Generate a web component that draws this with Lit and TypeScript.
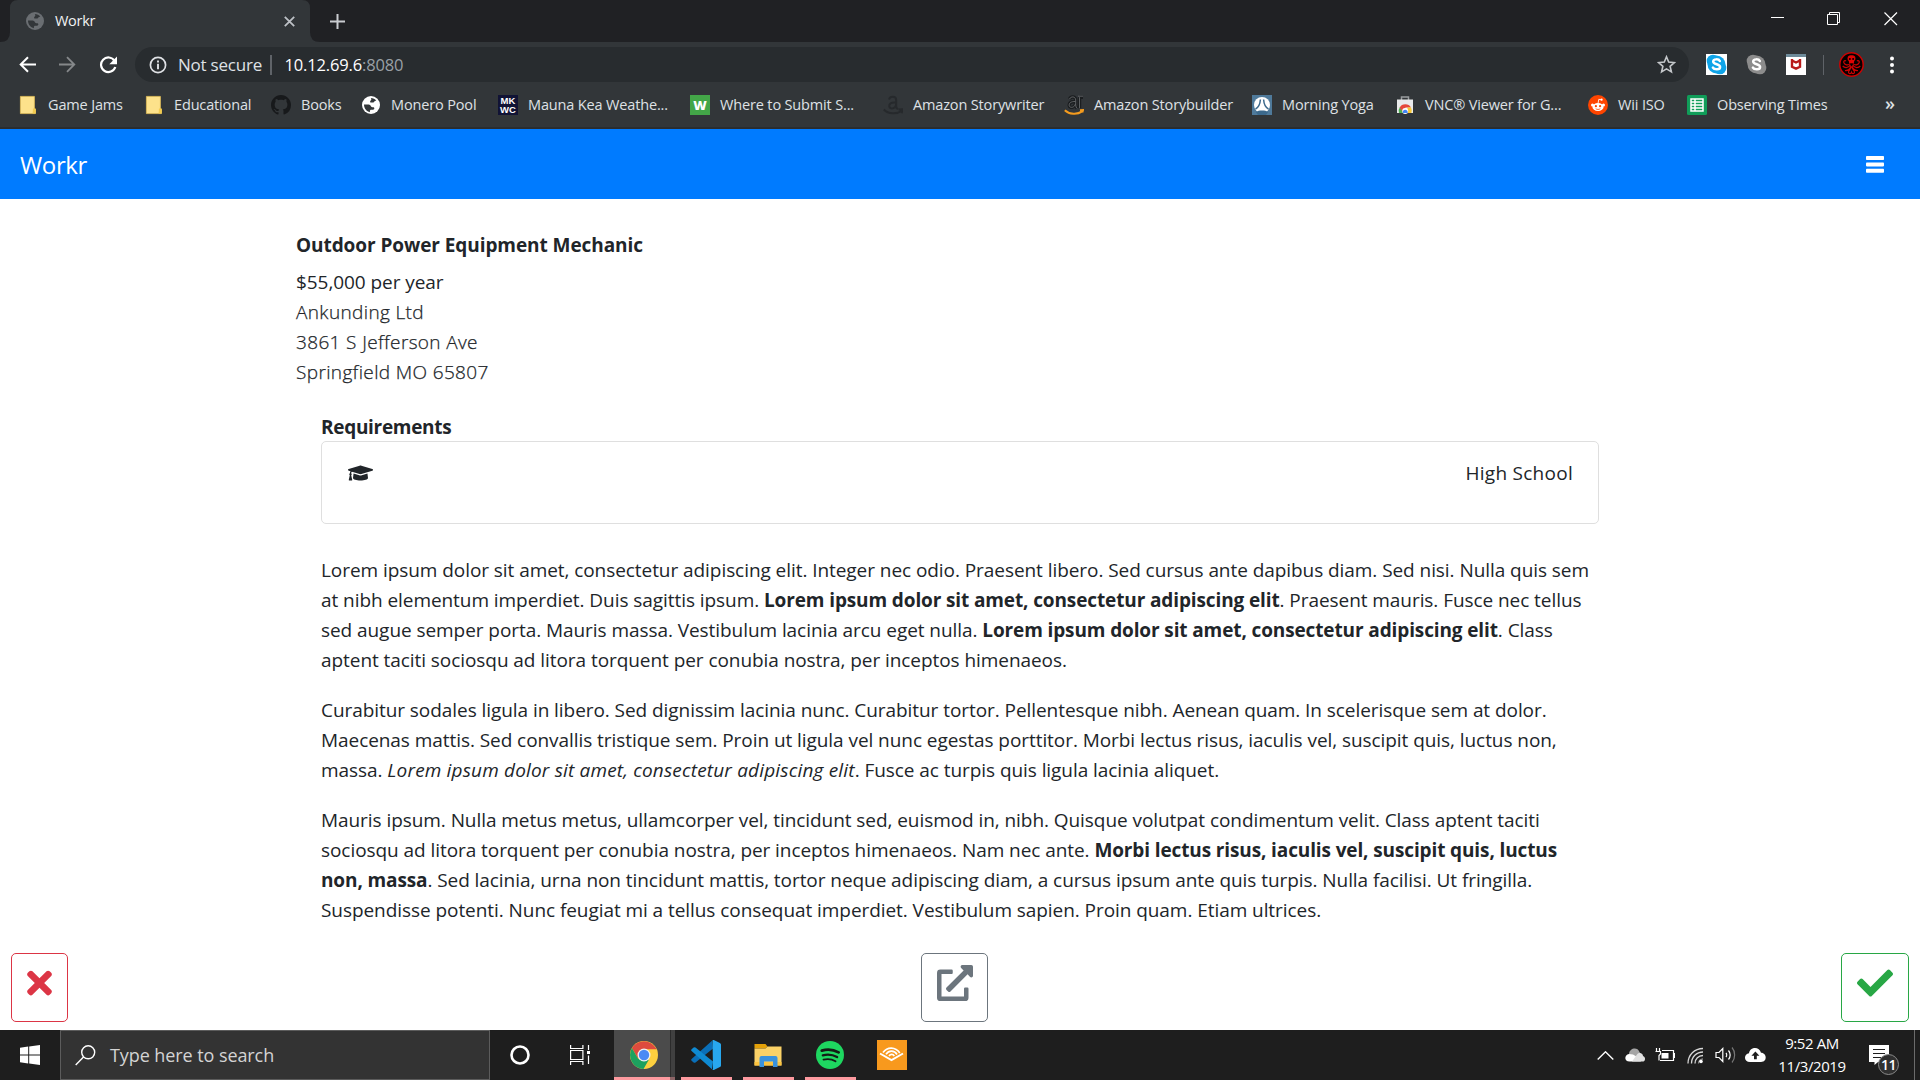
import { LitElement, html, css, svg, nothing } from "lit";
import { customElement } from "lit/decorators.js";

const globe = (color: string, hole: string, size: number) => html`
  <svg width=${size} height=${size} viewBox="0 0 18 18">
    <circle cx="9" cy="9" r="9" fill=${color} />
    <path fill=${hole} d="M2 8.600h4.600c1.300 0 1.800.8 2.300 1.700.4.800 1.200 1 2.100 1 1 0 1.300.5 1.300 1.200 0 .8-.6 1.200-1.500 1.200H9.300c-.9 0-1.400.6-1.400 1.300v1.300C4.500 15.500 2 12.500 2 8.600z" />
    <path fill=${hole} d="M8.800 2c2.300 0 4.300 1 5.500 2.700-.9 0-1.700.3-2.100 1-.4.6-1 .9-1.700.9H9.300c-.8 0-1.200-.4-1.200-.9 0-.7.5-1 .9-1.400.5-.5.3-1.500-.2-2.300z" />
  </svg>
`;

const folder = html`
  <svg width="20" height="20" viewBox="0 0 20 20">
    <path fill="#fde28b" stroke="#e3c059" stroke-width=".8" d="M2.400 1.400h14v12.200l1 .8v4.200h-15z" />
    <path fill="#f2cb4f" d="M15 13.400h2.800v5.200H14.600z" />
  </svg>
`;

const github = html`
  <svg width="20" height="20" viewBox="0 0 16 16">
    <path
      fill="#17191b"
      d="M8 0C3.580 0 0 3.580 0 8c0 3.540 2.290 6.530 5.470 7.590.4.070.55-.17.55-.38 0-.19-.01-.82-.01-1.490-2.010.37-2.530-.49-2.690-.94-.09-.23-.48-.94-.82-1.130-.28-.15-.68-.52-.01-.53.63-.01 1.080.58 1.230.82.72 1.210 1.870.87 2.330.66.070-.52.28-.87.51-1.070-1.780-.2-3.640-.89-3.640-3.950 0-.87.31-1.590.82-2.150-.08-.2-.36-1.020.08-2.120 0 0 .67-.21 2.200.82.64-.18 1.320-.27 2-.27s1.360.09 2 .27c1.530-1.040 2.200-.82 2.200-.82.44 1.100.16 1.920.08 2.120.51.56.82 1.270.82 2.150 0 3.070-1.870 3.750-3.650 3.950.29.25.54.73.54 1.480 0 1.070-.01 1.930-.01 2.200 0 .21.15.46.55.38A8.010 8.010 0 0 0 16 8c0-4.420-3.580-8-8-8z"
    />
  </svg>
`;

const mkwc = html`<span class="mkwc"><span>MK</span><span>WC</span></span>`;
const wTile = html`<span class="wtile">W</span>`;

const storywriter = html`
  <svg width="20" height="20" viewBox="0 0 20 20" fill="none">
    <path stroke="#26292c" stroke-width="2" d="M6 4.500C7 1 13 .8 13.200 5v6.500c0 1.500.8 2.200 1.800 2.600M13 7.500C8 7 5.800 9 6.300 11.500c.7 3.300 6 2.200 6.800-1.500" />
    <path stroke="#26292c" stroke-width="2" d="M.8 14.500c4.500 4.700 13 5 18 1.200M15.500 14.500l4-.3-.8 4" />
  </svg>
`;
const storybuilder = html`
  <svg width="20" height="20" viewBox="0 0 20 20" fill="none">
    <path stroke="#1b1e20" stroke-width="3.400" d="M5.500 4C7 1 11.500 1.200 11.700 5v5c0 1.500.6 2.600 1.300 3.400M11.500 6.500C7 6.300 5 8 5.200 10.500c.5 3 5.400 2.300 6.200-1.500M15.500 2.200v11M15.500 2.200h3.500" />
    <path stroke="#66696b" stroke-width=".9" d="M5.500 4C7 1 11.500 1.200 11.700 5v5c0 1.500.6 2.600 1.300 3.400M11.500 6.500C7 6.300 5 8 5.200 10.500c.5 3 5.400 2.300 6.200-1.500M15.500 2.200v11M14 1.200h5" />
    <path stroke="#f49b1e" stroke-width="2" d="M.8 15.200c4.500 4.300 12.500 4.600 17.400 1.200M16 15.300l3-.3-.7 2.600" />
  </svg>
`;
const yoga = html`
  <svg width="20" height="20" viewBox="0 0 20 20">
    <path fill="#4f7a9b" d="M0 0h20v20H0z" />
    <circle cx="10" cy="10" r="8" fill="#fff" />
    <path stroke="#3c698c" stroke-width="1.500" fill="none" d="M8.400 4.500C8 10 6.500 12.500 3.500 14M11.600 4.500c.4 5.500 1.900 8 4.900 9.500" />
    <path fill="#3c698c" d="M4 17.200c1.300-1.500 3.500-1.800 6-1.800s4.700.3 6 1.800L14 20H6z" />
  </svg>
`;
const webstore = html`
  <svg width="20" height="20" viewBox="0 0 20 20">
    <path fill="none" stroke="#9a9da0" stroke-width="1.500" d="M6.500 5V2h7v3" />
    <path fill="#e9eaeb" d="M2 4.500h16v13.500H2z" />
    <path fill="#4caf50" d="M4 18a6.500 6.500 0 0 1 1-6l4 6z" />
    <path fill="#e5483b" d="M4.600 12.600A6.500 6.500 0 0 1 16 12.500h-5.500L8.500 18 5 13z" />
    <path fill="#f8c733" d="M12.500 12.500H16a7 7 0 0 1 .4 5.500h-4.500z" />
    <circle cx="10.200" cy="16" r="3" fill="#fff" />
    <path fill="#4285f4" d="M7.800 18a2.500 2.500 0 1 1 4.800 0z" />
  </svg>
`;
const reddit = html`
  <svg width="20" height="20" viewBox="0 0 20 20">
    <circle cx="10" cy="10" r="10" fill="#ff4500" />
    <ellipse cx="10" cy="12" rx="5.600" ry="4" fill="#fff" />
    <circle cx="4.500" cy="10" r="1.500" fill="#fff" /><circle cx="15.500" cy="10" r="1.500" fill="#fff" />
    <circle cx="13.600" cy="4.700" r="1.100" fill="#fff" />
    <path stroke="#fff" stroke-width=".9" fill="none" d="M10 8.500l.8-4.200 2.600.5" />
    <circle cx="7.900" cy="11.200" r="1.100" fill="#ff4500" /><circle cx="12.100" cy="11.200" r="1.100" fill="#ff4500" />
    <path stroke="#ff4500" stroke-width=".8" fill="none" d="M7.700 13.700c1.300 1 3.300 1 4.600 0" />
  </svg>
`;
const sheets = html`
  <svg width="20" height="20" viewBox="0 0 20 20">
    <rect width="20" height="20" rx="1.500" fill="#109d59" />
    <path fill="none" stroke="#fff" stroke-width="1.500" d="M4 4h12v12H4zM4 7h12M4 10h12M4 13h12M8 4v12" />
  </svg>
`;

/** Bookmark bar entries: icon, label and the width each one takes up. */
const BOOKMARKS = [
  { icon: folder, label: "Game Jams", width: 126 },
  { icon: folder, label: "Educational", width: 127 },
  { icon: github, label: "Books", width: 90 },
  { icon: globe("#ffffff", "#323639", 18), label: "Monero Pool", width: 137 },
  { icon: mkwc, label: "Mauna Kea Weathe...", width: 192 },
  { icon: wTile, label: "Where to Submit S...", width: 193 },
  { icon: storywriter, label: "Amazon Storywriter", width: 181 },
  { icon: storybuilder, label: "Amazon Storybuilder", width: 188 },
  { icon: yoga, label: "Morning Yoga", width: 143 },
  { icon: webstore, label: "VNC® Viewer for G...", width: 193 },
  { icon: reddit, label: "Wii ISO", width: 99 },
  { icon: sheets, label: "Observing Times", width: 150 },
];

const skype = (body: string, tile: string | null) => html`
  <svg width="21" height="21" viewBox="0 0 21 21">
    ${tile ? svg`<path fill=${tile} d="M0 0h21v21H0z" />` : nothing}
    <circle cx="7" cy="7" r="6.300" fill=${body} /><circle cx="14" cy="14" r="6.300" fill=${body} />
    <circle cx="10.500" cy="10.500" r="9" fill=${body} />
    <path fill="none" stroke="#fff" stroke-width="2.500" stroke-linecap="round" d="M13.800 7C12.800 4.800 7.200 4.700 7.200 7.500c0 3.400 6.900 2.200 6.900 5.500 0 3.200-6 2.900-7.200.6" />
  </svg>
`;

@customElement("browser-chrome")
class BrowserChrome extends LitElement {
  static styles = css`
    :host { display: flex; flex-direction: column; height: 129px; background: #323639; color: #dfe1e5; font: 14.5px "Open Sans", "Noto Sans", sans-serif; box-sizing: border-box; box-shadow: inset 0 -2px #2a2d30; }
    svg { display: block; flex: none; }
    .strip { display: flex; height: 42px; background: #202124; }
    .tab { display: flex; align-items: center; box-sizing: border-box; width: 320px; height: 42px; padding: 0 25px 0 26px; clip-path: path("M0 42Q10 42 10 32V8Q10 0 18 0H302Q310 0 310 8V32Q310 42 320 42Z"); background: #323639; }
    .title { margin: -1px 0 0 11px; flex: 1; color: #f1f3f4; letter-spacing: -0.3px; line-height: 22px; }
    .plus { margin: 14px 0 0 10px; }
    .window { display: flex; margin-left: auto; padding: 12px 22px 0 0; gap: 43px; }
    .toolbar { display: flex; align-items: center; height: 45px; padding-left: 19px; }
    .nav { display: flex; gap: 23px; width: 116px; align-items: center; }
    .omnibox { display: flex; align-items: center; box-sizing: border-box; width: 1554px; height: 35px; padding: 0 13px 0 14px; border-radius: 18px; background: #282c2f; font-size: 17px; }
    .secure { margin-left: 11px; width: 92px; letter-spacing: -0.22px; white-space: nowrap; }
    .rule { width: 1.5px; height: 20px; background: #5f6368; }
    .url { margin-left: 13px; flex: 1; color: #fff; font-size: 16.5px; letter-spacing: -0.15px; }
    .port { color: #9aa0a6; }
    .ext { display: flex; align-items: center; padding-left: 17px; }
    .ext .rule { margin: 0 15px 0 17px; width: 1px; }
    .bookmarks { display: flex; align-items: center; height: 36px; padding-left: 18px; }
    .bookmark { display: flex; align-items: center; gap: 10px; white-space: nowrap; letter-spacing: -0.15px; }
    .label { margin-top: -1px; }
    .icon { display: flex; justify-content: center; width: 20px; }
    .more { margin-left: 48px; font-size: 18px; font-weight: 600; line-height: 20px; padding-bottom: 4px; }
    .mkwc { display: flex; flex-direction: column; align-items: center; justify-content: center; width: 20px; height: 20px; background: #111335; color: #fff; font: bold 9.5px/9px "Liberation Sans", Arial, sans-serif; letter-spacing: 0; }
    .wtile { display: flex; align-items: center; justify-content: center; width: 20px; height: 20px; background: #43a648; color: #fff; font-weight: 800; font-size: 13px; line-height: 20px; }
  `;

  render() {
    return html`
      <div class="strip">
        <div class="tab">
          ${globe("#6a6e72", "#323639", 18)}
          <span class="title">Workr</span>
          <svg width="11" height="11" viewBox="0 0 11 11"><path stroke="#bdc1c6" stroke-width="1.800" d="M.8.8l9.400 9.400M10.200.8L.8 10.200" /></svg>
        </div>
        <svg class="plus" width="15" height="15" viewBox="0 0 15 15"><path stroke="#c9ccd0" stroke-width="2" d="M7.500 0v15M0 7.500h15" /></svg>
        <div class="window">
          <svg width="13" height="13" viewBox="0 0 13 13"><path stroke="#fff" d="M0 5.500h13" /></svg>
          <svg width="14" height="14" viewBox="0 0 14 14" fill="none"><path stroke="#fff" d="M.5 2.500h10v10h-10zM2.500 2.500v-2h10v10h-2" /></svg>
          <svg width="14" height="14" viewBox="0 0 14 14"><path stroke="#fff" stroke-width="1.200" d="M.5.5l12.500 12.500M13 .5L.5 13" /></svg>
        </div>
      </div>
      <div class="toolbar">
        <div class="nav">
          <svg width="17" height="17" viewBox="0 0 17 17" fill="none"><path stroke="#fff" stroke-width="2" d="M17 8.500H2M9 1.200L1.700 8.500 9 15.800" /></svg>
          <svg width="17" height="17" viewBox="0 0 17 17" fill="none"><path stroke="#85888a" stroke-width="1.800" d="M0 8.500h15M8 1.200l7.300 7.300L8 15.800" /></svg>
          <svg width="19" height="18" viewBox="0 0 19 18" fill="none"><path stroke="#fff" stroke-width="2.200" d="M15.500 4.800A7.300 7.300 0 1 0 16.300 11" /><path fill="#fff" d="M18 .5v7.700h-7.700z" /></svg>
        </div>
        <div class="omnibox">
          <svg width="18" height="18" viewBox="0 0 18 18" fill="none"><circle cx="9" cy="9" r="7.600" stroke="#dfe1e5" stroke-width="1.700" /><path stroke="#dfe1e5" stroke-width="1.900" d="M9 4.500v2M9 7.800v5.500" /></svg>
          <span class="secure">Not secure</span>
          <span class="rule"></span>
          <span class="url">10.12.69.6<span class="port">:8080</span></span>
          <svg width="19" height="19" viewBox="0 0 19 19"><path fill="none" stroke="#c4c7ca" stroke-width="1.600" d="M9.500 1.800l2.200 5.300 5.700.5-4.300 3.700 1.300 5.600-4.900-3-4.900 3 1.300-5.600L1.600 7.600l5.700-.5z" /></svg>
        </div>
        <div class="ext">
          ${skype("#0fa4e8", "#ffffff")}
          <svg width="19" height="1"></svg>
          ${skype("#8c8c8c", null)}
          <svg width="19" height="1"></svg>
          <svg width="20" height="21" viewBox="0 0 20 21">
            <path fill="#fff" d="M0 0h20v21H0z" /><path fill="#6d8a99" d="M0 0h20v3H0z" />
            <path fill="none" stroke="#b81a1a" stroke-width="2.400" d="M6 5v7.800l4 1.900 4-1.900V5M5.500 6.200L10 8.500l4.500-2.300" />
          </svg>
          <span class="rule"></span>
          <svg width="25" height="25" viewBox="0 0 25 25" fill="none">
            <circle cx="12.500" cy="12.500" r="11.700" fill="#080000" stroke="#cc0303" stroke-width="1.500" />
            <path fill="#e00404" d="M9 4.500C10 2.700 15 2.700 16 4.500c1 2 .4 3.600-.8 4.500l-.4 2.300h-4.600L9.800 9C8.600 8 8 6.500 9 4.500z" />
            <circle cx="10.900" cy="7" r="1" fill="#080000" /><circle cx="14.100" cy="7" r="1" fill="#080000" />
            <path stroke="#cc0303" stroke-width="1.200" d="M11 11.500C9 14 5.500 12.800 4.800 10.500 4.400 9 6 8 7 9M14 11.500c2 2.500 5.500 1.300 6.200-1 .4-1.500-1.200-2.500-2.200-1.500M11.500 12.800C9 16.500 5.500 16 3.700 14M13.500 12.800c2.500 3.700 6 3.200 7.800 1.200M12 14c-1 3.500-3 4.800-6 4.500M13 14c1 3.500 3 4.800 6 4.500M12 15c0 2-2.300 3-2.500 5 0 2 2.500 2 3 .3.5 1.700 3 1.700 3-.3-.2-2-2.500-3-2.500-5" />
          </svg>
          <svg width="26" height="1"></svg>
          <svg width="4" height="18" viewBox="0 0 4 18" fill="#fff"><circle cx="2" cy="2.500" r="2" /><circle cx="2" cy="9" r="2" /><circle cx="2" cy="15.500" r="2" /></svg>
        </div>
      </div>
      <div class="bookmarks">
        ${BOOKMARKS.map(
          (b) => html`<div class="bookmark" style="width:${b.width}px"><span class="icon">${b.icon}</span><span class="label">${b.label}</span></div>`,
        )}
        <span class="more">»</span>
      </div>
    `;
  }
}

@customElement("job-page")
class JobPage extends LitElement {
  static styles = css`
    :host { display: flex; flex-direction: column; flex: 1; background: #fff; color: #212529; font: 19px/30px "Open Sans", "Noto Sans", sans-serif; letter-spacing: -0.062px; }
    svg { display: block; }
    p, h1, h2 { margin: 0; font-size: inherit; white-space: nowrap; }
    b, h1, h2 { font-weight: 700; letter-spacing: -0.12px; }
    h1 { letter-spacing: -0.07px; }
    em { letter-spacing: 0.17px; }
    .navbar { display: flex; align-items: center; justify-content: space-between; height: 70px; padding: 0 36px 0 20px; background: #007bff; color: #fff; }
    .brand { padding-top: 1px; font-size: 24px; letter-spacing: -0.35px; }
    .job { padding: 31px 297px 0 296px; }
    .summary { padding-top: 7px; }
    .light { font-weight: 300; letter-spacing: 0.36px; -webkit-text-stroke: 0.25px #212529; }
    .details { padding: 25px 24px 0 25px; }
    .details h2 { height: 29px; letter-spacing: -0.3px; }
    .card { display: flex; justify-content: space-between; box-sizing: border-box; height: 83px; padding: 16px 25px 0 26px; border: 1px solid #dfdfdf; border-radius: 5px; letter-spacing: 0.27px; }
    .card svg { margin-top: 5px; }
    .copy { display: flex; flex-direction: column; gap: 20px; padding-top: 31px; }
    .actions { display: flex; justify-content: space-between; margin-top: auto; padding: 0 11px 8px; }
    .button { display: flex; align-items: flex-start; justify-content: center; box-sizing: border-box; height: 69px; padding: 11px 0 0; border: 1px solid currentColor; border-radius: 5px; background: none; }
    .reject { width: 57px; color: #dc3545; }
    .open { width: 67px; color: #6c757d; }
    .accept { width: 68px; color: #28a745; }
  `;

  render() {
    return html`
      <nav class="navbar">
        <span class="brand">Workr</span>
        <svg width="18" height="17" viewBox="0 0 18 17" fill="#fff"><rect width="18" height="4" rx=".8" /><rect y="6.400" width="18" height="4" rx=".8" /><rect y="12.800" width="18" height="4" rx=".8" /></svg>
      </nav>
      <div class="job">
        <h1>Outdoor Power Equipment Mechanic</h1>
        <div class="summary">
          <p>$55,000 per year</p>
          <p class="light">Ankunding Ltd</p>
          <p class="light">3861 S Jefferson Ave</p>
          <p class="light">Springfield MO 65807</p>
        </div>
        <div class="details">
          <h2>Requirements</h2>
          <div class="card">
            <svg width="25" height="20" viewBox="0 0 640 512" fill="currentColor">
              <path d="M622.340 153.200L343.400 67.500c-15.200-4.670-31.600-4.670-46.790 0L17.660 153.200c-23.540 7.230-23.540 38.360 0 45.590l48.630 14.940c-10.670 13.190-17.230 29.280-17.880 46.900C38.780 266.150 32 276.110 32 288c0 10.780 5.680 19.850 13.860 25.650L20.330 428.530C18.110 438.520 25.710 448 35.940 448h56.110c10.240 0 17.840-9.480 15.620-19.470L82.140 313.650C90.320 307.850 96 298.780 96 288c0-11.570-6.470-21.250-15.660-26.870.76-15.020 8.440-28.300 20.690-36.720L296.600 284.500c9.060 2.780 26.440 6.250 46.790 0l278.950-85.700c23.550-7.240 23.550-38.360 0-45.600zM352.790 315.090c-28.530 8.760-52.840 3.920-65.590 0l-145.020-44.550L128 384c0 35.350 85.960 64 192 64s192-28.650 192-64l-14.180-113.470-145.030 44.560z" />
            </svg>
            <span>High School</span>
          </div>
          <div class="copy">
            <p>
              Lorem ipsum dolor sit amet, consectetur adipiscing elit. Integer nec odio. Praesent libero. Sed cursus ante dapibus diam. Sed nisi. Nulla quis sem<br />
              at nibh elementum imperdiet. Duis sagittis ipsum. <b>Lorem ipsum dolor sit amet, consectetur adipiscing elit</b>. Praesent mauris. Fusce nec tellus<br />
              sed augue semper porta. Mauris massa. Vestibulum lacinia arcu eget nulla. <b>Lorem ipsum dolor sit amet, consectetur adipiscing elit</b>. Class<br />
              aptent taciti sociosqu ad litora torquent per conubia nostra, per inceptos himenaeos.
            </p>
            <p>
              Curabitur sodales ligula in libero. Sed dignissim lacinia nunc. Curabitur tortor. Pellentesque nibh. Aenean quam. In scelerisque sem at dolor.<br />
              Maecenas mattis. Sed convallis tristique sem. Proin ut ligula vel nunc egestas porttitor. Morbi lectus risus, iaculis vel, suscipit quis, luctus non,<br />
              massa. <em>Lorem ipsum dolor sit amet, consectetur adipiscing elit</em>. Fusce ac turpis quis ligula lacinia aliquet.
            </p>
            <p>
              Mauris ipsum. Nulla metus metus, ullamcorper vel, tincidunt sed, euismod in, nibh. Quisque volutpat condimentum velit. Class aptent taciti<br />
              sociosqu ad litora torquent per conubia nostra, per inceptos himenaeos. Nam nec ante. <b>Morbi lectus risus, iaculis vel, suscipit quis, luctus<br />
              non, massa</b>. Sed lacinia, urna non tincidunt mattis, tortor neque adipiscing diam, a cursus ipsum ante quis turpis. Nulla facilisi. Ut fringilla.<br />
              Suspendisse potenti. Nunc feugiat mi a tellus consequat imperdiet. Vestibulum sapien. Proin quam. Etiam ultrices.
            </p>
          </div>
        </div>
      </div>
      <div class="actions">
        <button class="button reject">
          <svg width="25" height="36" viewBox="0 0 352 512" fill="currentColor"><path d="M242.720 256l100.070-100.070c12.280-12.280 12.280-32.190 0-44.480l-22.240-22.240c-12.280-12.280-32.190-12.280-44.480 0L176 189.280 75.930 89.210c-12.280-12.280-32.190-12.280-44.480 0L9.210 111.450c-12.280 12.280-12.280 32.190 0 44.480L109.280 256 9.210 356.070c-12.280 12.280-12.280 32.190 0 44.480l22.240 22.240c12.280 12.280 32.200 12.280 44.480 0L176 322.720l100.070 100.070c12.280 12.280 32.200 12.280 44.480 0l22.240-22.240c12.280-12.280 12.280-32.190 0-44.480L242.720 256z" /></svg>
        </button>
        <button class="button open">
          <svg width="36" height="36" viewBox="0 0 512 512" fill="currentColor"><path d="M432,320H400a16,16,0,0,0-16,16V448H64V128H208a16,16,0,0,0,16-16V80a16,16,0,0,0-16-16H48A48,48,0,0,0,0,112V464a48,48,0,0,0,48,48H400a48,48,0,0,0,48-48V336A16,16,0,0,0,432,320ZM488,0h-128c-21.370,0-32.050,25.910-17,41l35.730,35.730L135,320.370a24,24,0,0,0,0,34L157.670,377a24,24,0,0,0,34,0L435.280,133.320,471,169c15,15,41,4.500,41-17V24A24,24,0,0,0,488,0Z" /></svg>
        </button>
        <button class="button accept">
          <svg width="36" height="36" viewBox="0 0 512 512" fill="currentColor"><path d="M173.898 439.404l-166.400-166.400c-9.997-9.997-9.997-26.206 0-36.204l36.203-36.204c9.997-9.998 26.207-9.998 36.204 0L192 312.690 432.095 72.596c9.997-9.997 26.207-9.997 36.204 0l36.203 36.204c9.997 9.997 9.997 26.206 0 36.204l-294.400 294.401c-9.998 9.997-26.207 9.997-36.204-.001z" /></svg>
        </button>
      </div>
    `;
  }
}

const APPS = [
  {
    active: true,
    open: true,
    icon: html`
      <svg width="28" height="28" viewBox="0 0 28 28">
        <circle cx="14" cy="14" r="14" fill="#fdd03f" />
        <path fill="#dd4b3e" d="M1.900 7A14 14 0 0 1 26.100 7.300L26.500 8.200H14L8 17.500z" />
        <path fill="#1da15f" d="M1.900 7A14 14 0 0 0 13.500 28L19 18.500 14 20l-6-2.500z" />
        <circle cx="14" cy="14" r="6.500" fill="#f1f1f1" /><circle cx="14" cy="14" r="5.200" fill="#4a8af4" />
      </svg>`,
  },
  {
    active: false,
    open: true,
    icon: html`
      <svg width="30" height="30" viewBox="0 0 30 30">
        <path fill="#0a6fb8" d="M22 8.500L4.500 22.400q-1 .7-1.900 0L.6 20.700q-.9-.9 0-1.700L21 .7z" />
        <path fill="#0f8ad2" d="M22 21.500L4.500 7.600q-1-.7-1.900 0L.6 9.300q-.9.900 0 1.700L21 29.300z" />
        <path fill="#28a8ef" d="M21.500.3q.8-.6 1.800-.1l5.600 2.700q1.100.6 1.100 1.700v20.800q0 1.100-1.100 1.700l-5.600 2.700q-1 .5-1.800-.1l.5-1z" />
      </svg>`,
  },
  {
    active: false,
    open: true,
    icon: html`
      <svg width="28" height="24" viewBox="0 0 28 24">
        <path fill="#e3a008" d="M.5 1h11l2 2.500-2 2H.5z" />
        <path fill="#fbd267" d="M.5 5.500h11l2-2h14V22.500H.5z" />
        <path fill="#fdc43f" d="M.5 19h27v3.500H.5z" />
        <path fill="#3a92dc" d="M5.500 24V15q0-2 2-2h14q2 0 2 2v9H19v-5.500H10V24z" />
      </svg>`,
  },
  {
    active: false,
    open: true,
    icon: html`
      <svg width="28" height="28" viewBox="0 0 28 28" fill="none" stroke="#141b16" stroke-linecap="round">
        <circle cx="14" cy="14" r="14" fill="#1ed760" stroke="none" />
        <path stroke-width="2.800" d="M5.800 9.600c5.500-1.600 12-.9 16.800 1.800" />
        <path stroke-width="2.300" d="M6.800 14.300c5-1.300 10-.7 14.300 1.800" />
        <path stroke-width="1.900" d="M7.500 18.600c4.300-1 8.500-.5 12 1.600" />
      </svg>`,
  },
  {
    active: false,
    open: false,
    icon: html`
      <svg width="30" height="30" viewBox="0 0 30 30" fill="none" stroke="#fff">
        <path fill="#f8991d" stroke="none" d="M0 0h30v30H0z" />
        <path stroke-width="2" d="M3 13.500l11.500 6.500L26 13.500" />
        <path stroke-width="1.700" d="M6 12.500C10.500 6.500 18.500 6.800 22.800 13M9 14.300c3-4.300 8.300-4 11 .2M12 16c1.500-2.200 4-2.200 5.300.2" />
      </svg>`,
  },
];

const TRAY = [
  html`<svg width="17" height="9" viewBox="0 0 17 9" fill="none"><path stroke="#fff" stroke-width="1.400" d="M.7 8.400l7.800-7.600 7.800 7.600" /></svg>`,
  html`<svg width="20" height="14" viewBox="0 0 20 14">
    <path fill="#a5a5a5" d="M4 6C4.500 0 12.500-1.500 14.500 4L17 8l-9 3-4-2z" />
    <path fill="#fff" d="M4.500 13.500C-1 13.500-1 6.800 4 6l4 .5 6 3.500 2 3.500z" /><path fill="#e0e0e0" d="M7 13.500l5-7c2.500-3 6-1 6 1.500 3 1 2.500 5.500-.5 5.500z" />
  </svg>`,
  html`<svg width="20" height="14" viewBox="0 0 20 14" fill="none">
    <path stroke="#fff" stroke-width="1.200" d="M7 2.500h11.500v10H5M18.500 5.500h1v4h-1M1.500 0v3M4.500 0v3M.5 3.500h5v2.500l-1.500 1.500v5" /><path fill="#fff" d="M6.500 5h7v5.500h-7z" />
  </svg>`,
  html`<svg width="17" height="17" viewBox="0 0 17 17" fill="none" stroke="#d8d8d8" stroke-width="1.300">
    <path d="M1 16.500C1 8 7.500 1.500 16 1.500" /><path d="M4.500 16.500C4.500 10 9.500 5 16 5" /><path d="M8 16.500C8 12 11.500 8.500 16 8.500" /><path d="M11.500 16.500c0-2.500 2-4.500 4.500-4.500" stroke="#888" /><circle cx="14" cy="14.500" r="1.800" fill="#fff" stroke="none" />
  </svg>`,
  html`<svg width="21" height="18" viewBox="0 0 21 18" fill="none" stroke="#fff" stroke-width="1.200">
    <path d="M1 6.500h3L7.800 2.500v13L4 11.500H1z" /><path d="M11 7c.9 1 .9 3 0 4M13.500 4.500c2.200 2.500 2.200 6.500 0 9" /><path stroke="#777" d="M17 1.500c3.500 4 3.500 11 0 15" />
  </svg>`,
  html`<svg width="21" height="14" viewBox="0 0 21 14">
    <path fill="#fff" d="M5 14C-1.500 14-1.500 6 4 5.300 5-1.500 14.500-1.800 16 4.800c6 0 6.500 9.200 0 9.200z" /><path fill="#1e1e1e" d="M10.400 3.500l4 4.200h-2.600v3.600H9V7.700H6.400z" />
  </svg>`,
];

@customElement("task-bar")
class TaskBar extends LitElement {
  static styles = css`
    :host { display: flex; height: 50px; background: #1e1e1e; color: #fff; font: 15px/23px "Open Sans", "Noto Sans", sans-serif; }
    svg { display: block; }
    .cell { display: flex; align-items: center; justify-content: center; width: 60px; }
    .search { display: flex; align-items: center; gap: 14px; box-sizing: border-box; width: 430px; padding-left: 14px; border: 1px solid #5c5c5c; background: #333; color: #d3d3d3; font-size: 18px; letter-spacing: -0.08px; }
    .apps { display: flex; padding-left: 4px; }
    .app { display: grid; grid-template-rows: 47px 3px; justify-items: center; align-items: center; width: 62px; }
    .app.active { width: 61px; justify-items: stretch; background: linear-gradient(to right, #4b4b4b 56px, #2b2b2b 56px 57px, #404040 57px); }
    .app.active svg { margin-left: 16px; }
    .app svg { margin-top: 3px; }
    .app.active .line { width: 61px; background: linear-gradient(to right, #fd9a9f 56px, #8c6466 56px); }
    .line { width: 51px; height: 3px; background: #fd9a9f; }
    .tray { display: flex; margin-left: auto; }
    .status { display: flex; align-items: center; justify-content: center; width: 30px; }
    .clock { display: flex; flex-direction: column; align-items: center; width: 84px; padding-top: 2px; letter-spacing: -0.42px; }
    .notes { display: flex; align-items: center; width: 61px; box-sizing: border-box; padding-left: 15px; border-right: 1px solid #6b6b6b; margin-right: 5px; }
    .stack { position: relative; }
    .badge { position: absolute; left: 9px; top: 9px; width: 19px; height: 19px; border: 1px solid #8a8a8a; border-radius: 50%; background: #303030; font-size: 14px; line-height: 19px; text-align: center; font-weight: 600; letter-spacing: -0.5px; }
  `;

  render() {
    return html`
      <div class="cell">
        <svg width="20" height="20" viewBox="0 0 20 20" fill="#fff"><path d="M0 2.700L8.200 1.500v8H0zM9.200 1.400L20 0v9.500H9.200zM0 10.500h8.200v8L0 17.300zM9.200 10.500H20V20L9.200 18.600z" /></svg>
      </div>
      <div class="search">
        <svg width="21" height="21" viewBox="0 0 21 21" fill="none"><circle cx="13.200" cy="7.300" r="6.500" stroke="#fff" stroke-width="1.400" /><path stroke="#fff" stroke-width="1.400" d="M8.500 12L.7 20" /></svg>
        <span>Type here to search</span>
      </div>
      <div class="cell"><svg width="20" height="20" viewBox="0 0 20 20"><circle cx="10" cy="10" r="8.500" fill="none" stroke="#fff" stroke-width="2.600" /></svg></div>
      <div class="cell"><svg width="20" height="20" viewBox="0 0 20 20" fill="none"><path stroke="#fff" stroke-width="1.200" d="M.6 0v3.500h12.300V0M.6 5.500h12.300v9H.6zM.6 20v-3.500h12.300V20M18.500 0v5M18.500 10.500V19" /><path fill="#fff" d="M17 6h3v3h-3z" /></svg></div>
      <div class="apps">
        ${APPS.map(
          (a) => html`<div class="app ${a.active ? "active" : ""}">${a.icon}${a.open ? html`<span class="line"></span>` : nothing}</div>`,
        )}
      </div>
      <div class="tray">
        ${TRAY.map((icon) => html`<div class="status">${icon}</div>`)}
        <div class="clock"><span>9:52 AM</span><span>11/3/2019</span></div>
        <div class="notes">
          <div class="stack">
            <svg width="20" height="20" viewBox="0 0 20 20"><path fill="#fff" d="M0 0h20v17H9l-3.500 3v-3H0z" /><path stroke="#1e1e1e" stroke-width="1.200" d="M4 4.500h12M4 8.500h12M4 12.500h8" /></svg>
            <span class="badge">11</span>
          </div>
        </div>
      </div>
    `;
  }
}

@customElement("app-root")
class AppRoot extends LitElement {
  static styles = css`
    :host { display: flex; flex-direction: column; width: 1920px; height: 1080px; overflow: hidden; background: #fff; }
    .page { display: flex; flex: 1; }
  `;

  render() {
    return html`
      <browser-chrome></browser-chrome>
      <div class="page"><job-page></job-page></div>
      <task-bar></task-bar>
    `;
  }
}
